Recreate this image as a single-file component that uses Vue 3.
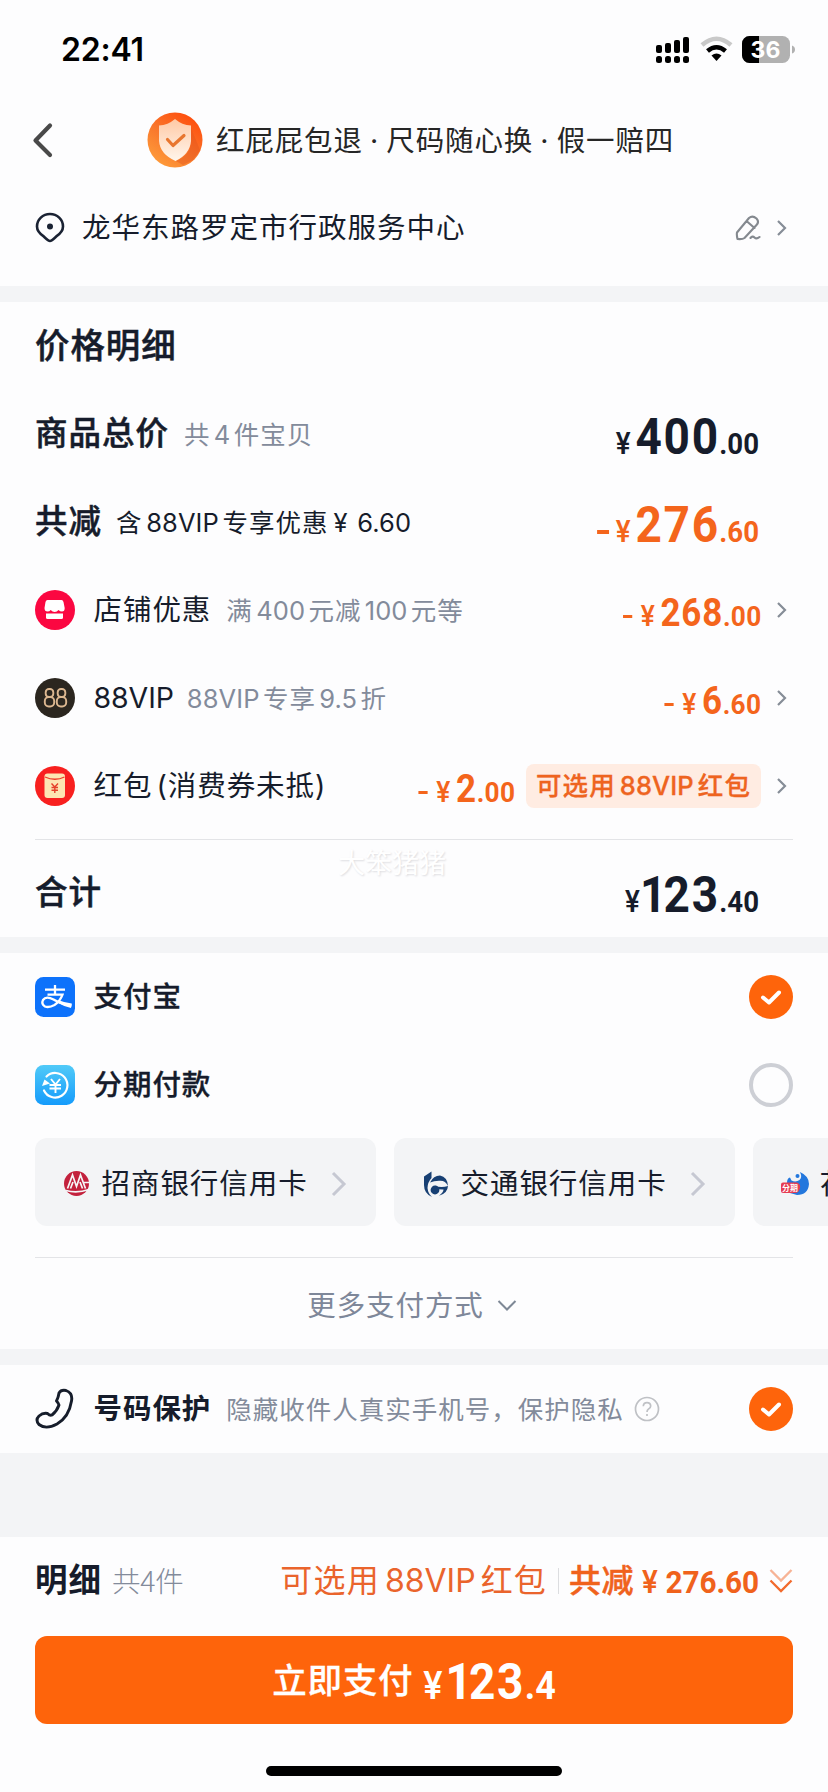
<script setup>
const discounts = [
  { id: 'shop', label: '店铺优惠', note: [['满'], ['400', 1], ['元减'], ['100', 1], ['元等']], int: '268', dec: '.00' },
  { id: 'vip', label: '88VIP', note: [['88VIP', 1], ['专享'], ['9.5', 1], ['折']], int: '6', dec: '.60' },
  { id: 'packet', label: '红包', extra: '(消费券未抵)', note: [], int: '2', dec: '.00', tag: true },
]
const cards = [
  { id: 'cmb', name: '招商银行信用卡' },
  { id: 'bocom', name: '交通银行信用卡' },
  { id: 'huabei', name: '花呗分期' },
]
</script>

<template>
  <main class="page">
    <header class="status">
      <span class="clock">22:41</span>
      <svg class="status-icons" width="142" height="30" viewBox="0 0 142 30">
        <g fill="#000">
          <rect x="0" y="11" width="6" height="8" rx="2" /><rect x="9" y="9" width="6" height="10" rx="2" />
          <rect x="18" y="6" width="6" height="13" rx="2" /><rect x="27" y="3" width="6" height="16" rx="2" />
          <rect x="0" y="22" width="6" height="7" rx="2.5" /><rect x="9" y="22" width="6" height="7" rx="2.5" />
          <rect x="18" y="22" width="6" height="7" rx="2.5" /><rect x="27" y="22" width="6" height="7" rx="2.5" />
        </g>
        <g fill="none">
          <path d="M46 11Q60.500-1.500 75 11" stroke="#c9c9c9" stroke-width="4.500" />
          <path d="M51.500 17Q60.500 9.500 69.500 17" stroke="#000" stroke-width="4.500" />
        </g>
        <path d="M55.500 21.500Q60.500 17.500 65.500 21.500L60.500 27Z" fill="#000" />
        <rect x="86" y="2" width="48" height="27" rx="7.500" fill="#b1b1b1" />
        <path d="M103 2H93.500A7.500 7.500 0 0 0 86 9.500V21.500A7.500 7.500 0 0 0 93.500 29H103Z" fill="#000" />
        <path d="M136 11.500Q139 12.500 139 15.500T136 19.500Z" fill="#b1b1b1" />
        <text x="109.500" y="24" text-anchor="middle" class="battery-text">36</text>
      </svg>
    </header>

    <nav class="nav">
      <svg class="back" width="22" height="36" viewBox="0 0 22 36" fill="none" stroke="#494949" stroke-width="4.200" stroke-linecap="round" stroke-linejoin="round"><path d="M18 3.500L3.500 18.500L18 33" /></svg>
      <svg class="shield" width="56" height="56" viewBox="0 0 56 56">
        <defs>
          <linearGradient id="gc" x1=".8" y1="0" x2=".1" y2="1"><stop offset="0" stop-color="#ff4a0a" /><stop offset=".5" stop-color="#f9772c" /><stop offset="1" stop-color="#ffa23c" /></linearGradient>
          <linearGradient id="gs" x1=".4" y1="0" x2=".4" y2="1"><stop offset="0" stop-color="#ffc9a5" /><stop offset="1" stop-color="#fff6ec" /></linearGradient>
        </defs>
        <circle cx="28" cy="28" r="27.500" fill="url(#gc)" />
        <path d="M44 16V32Q43 43 29 49L36 53L46 48L53 38Z" fill="#e0521c" opacity=".4" />
        <path d="M28 7Q35 13 44 13.500V29Q43 42 28.500 49Q13 42 12 29V13.500Q21 13 28 7Z" fill="url(#gs)" />
        <path d="M20.500 27.500L26 33.500L37 23.500" fill="none" stroke="#e8762f" stroke-width="3.200" stroke-linecap="round" stroke-linejoin="round" />
      </svg>
      <span class="promise">红屁屁包退 · 尺码随心换 · 假一赔四</span>
    </nav>

    <section class="address">
      <svg width="30" height="32" viewBox="0 0 30 32"><path d="M15 29Q13.500 29 9 24.700Q2 20 2 14.500A13 12.500 0 0 1 28 14.500Q28 20 21 24.700Q16.500 29 15 29Z" fill="none" stroke="#1a2233" stroke-width="2.600" /><circle cx="15" cy="14.500" r="3" fill="#1a2233" /></svg>
      <span class="place">龙华东路罗定市行政服务中心</span>
      <svg class="pen" width="26" height="28" viewBox="0 0 26 28" fill="none" stroke="#84898f" stroke-width="2.100" stroke-linecap="round" stroke-linejoin="round"><path d="M2 18.500L14 4Q17.500 1 21.500 4.500Q24.500 8 21.500 11L9.500 24Q7.500 25.500 2.500 25Q1.500 21 2 18.500ZM11.500 7L19.500 14M15.500 24Q17.500 21.500 19.500 23.500T24.500 23" /></svg>
      <svg class="arrow" width="12" height="18" viewBox="0 0 12 18"><path d="M2 2L9 9L2 16" /></svg>
    </section>

    <section class="block prices">
      <h1>价格明细</h1>
      <div class="row">
        <b class="head">商品总价</b>
        <span class="note total-note">共<i>4</i>件宝贝</span>
        <span class="price big dark"><em class="yen">¥</em><em class="int">400</em><em class="dec">.00</em></span>
      </div>
      <div class="row">
        <b class="head">共减</b>
        <span class="note ink">含<i>88VIP</i>专享优惠<i class="cny">¥</i><i>6.60</i></span>
        <span class="price big"><em class="minus"></em><em class="yen">¥</em><em class="int">276</em><em class="dec">.60</em></span>
      </div>
      <div v-for="d in discounts" :key="d.id" class="row">
        <svg class="icon" width="40" height="40" viewBox="0 0 40 40">
          <template v-if="d.id === 'shop'">
            <circle cx="20" cy="20" r="20" fill="#fb0741" />
            <path d="M12.500 10H26.500Q28 10 28.500 12L29.700 18Q29.700 21.500 27 21.500Q25 21.500 23.500 20Q22 22 19.700 22T15.700 20Q14.500 21.500 12.500 21.500Q9.500 21.500 9.500 18L10.500 12Q11 10 12.500 10Z" fill="#fff" />
            <path d="M11 23.500H28V27.500Q28 29 26.500 29H12.500Q11 29 11 27.500Z" fill="#fff" />
          </template>
          <template v-else-if="d.id === 'vip'">
            <circle cx="20" cy="20" r="20" fill="#2b261f" />
            <g fill="none" stroke="#dcb790" stroke-width="1.900"><rect x="10.700" y="11" width="7.600" height="8" rx="3.300" /><rect x="9.800" y="19" width="9.400" height="9.500" rx="4" /><rect x="22.700" y="11" width="7.600" height="8" rx="3.300" /><rect x="21.800" y="19" width="9.400" height="9.500" rx="4" /></g>
          </template>
          <template v-else>
            <circle cx="20" cy="20" r="20" fill="#f8201f" />
            <rect x="9.500" y="7.500" width="20.500" height="24.500" rx="3" fill="#fde5b2" />
            <path d="M10 11Q20 15.500 29.500 11" fill="none" stroke="#ee3a28" stroke-width="1.300" />
            <path d="M16.500 17.500L19.800 21L23 17.500M16.500 21.500H23M16.500 24.300H23M19.800 21V27" fill="none" stroke="#e5402a" stroke-width="1.400" />
          </template>
        </svg>
        <span class="label" :class="d.id">{{ d.label }}<span v-if="d.extra" class="extra">{{ d.extra }}</span></span>
        <span class="note"><template v-for="(p, i) in d.note" :key="i"><i v-if="p[1]" :class="{ first: i === 0 }">{{ p[0] }}</i><template v-else>{{ p[0] }}</template></template></span>
        <span class="price"><em class="minus"></em><em class="yen">¥</em><em class="int">{{ d.int }}</em><em class="dec">{{ d.dec }}</em></span>
        <span v-if="d.tag" class="tag">可选用<i>88VIP</i>红包</span>
        <svg class="arrow" width="12" height="18" viewBox="0 0 12 18"><path d="M2 2L9 9L2 16" /></svg>
      </div>
      <hr>
      <div class="row sum">
        <b class="head">合计</b>
        <span class="price big dark"><em class="yen">¥</em><em class="int lead-one">123</em><em class="dec">.40</em></span>
      </div>
      <span class="mark">大笨猪猪</span>
    </section>

    <section class="block pay">
      <div class="row">
        <svg class="icon" width="40" height="40" viewBox="0 0 40 40">
          <rect width="40" height="40" rx="8.500" fill="#0d72fb" />
          <path d="M10 12.700H30M20 8V17.500M12.500 17.700H27.500Q25 24.500 19.500 28Q14 31 10 29.500Q6 27 8 23Q11 18.500 18.500 22.500Q26 27 36.500 28.500" fill="none" stroke="#fff" stroke-width="2.300" />
          <path d="M23 23Q29 25.500 36.800 26.500L36 31Q29 29.500 22 25.500Z" fill="#fff" />
        </svg>
        <b class="label mid">支付宝</b>
        <svg class="check" width="44" height="44" viewBox="0 0 44 44"><circle cx="22" cy="22" r="22" /><path d="M14 22.500L20 27.500L30 17.500" /></svg>
      </div>
      <div class="row">
        <svg class="icon" width="40" height="40" viewBox="0 0 40 40">
          <defs><linearGradient id="gf" x1="0" y1="0" x2="0" y2="1"><stop offset="0" stop-color="#51caf8" /><stop offset="1" stop-color="#159bfb" /></linearGradient></defs>
          <rect width="40" height="40" rx="8.500" fill="url(#gf)" />
          <path d="M11.500 11.500A12.300 12.300 0 1 1 9 25.500" fill="none" stroke="#fff" stroke-width="2.200" stroke-linecap="round" />
          <path d="M7 21L9.500 14.500L15 18.500Z" fill="#fff" />
          <path d="M16 14L20.500 19.500L25 14M14.500 20H26M14.500 23.500H26M20.500 19.500V28" fill="none" stroke="#fff" stroke-width="1.900" />
        </svg>
        <b class="label mid">分期付款</b>
        <span class="radio"></span>
      </div>
      <div class="cards">
        <div v-for="c in cards" :key="c.id" class="card">
          <svg width="28" height="28" viewBox="0 0 28 28">
            <template v-if="c.id === 'cmb'">
              <circle cx="13.500" cy="13.500" r="12.500" fill="#c3213d" />
              <path d="M4.500 18.500L9.500 5L13.500 16.500L17.500 5L22.500 18.500M7.500 18.500L10 12M19.500 18.500L17 12M21 12.500H27" fill="none" stroke="#f6f6f8" stroke-width="1.700" />
              <path d="M3 20.500Q14 23.500 26 19.500" fill="none" stroke="#f6f6f8" stroke-width="1.800" />
            </template>
            <template v-else-if="c.id === 'bocom'">
              <path d="M2 6.500L9.500 1.500V8Q5.500 12.500 5.500 18Q6 23.500 10 27Q2 23.500 2 15Z" fill="#173f73" />
              <path d="M8 12.500Q11.500 5.500 18 5.500Q25.500 7 26 16Q23.500 10.800 18.500 10.800Q12.500 10.500 8 12.500Z" fill="#173f73" />
              <circle cx="13" cy="20" r="4.400" fill="#173f73" />
              <path d="M13 15.700Q19 18.300 26 16Q25.500 23.500 17 25.700Q21.500 22.500 21.500 19.500Q17 19.800 13 18Z" fill="#173f73" />
            </template>
            <template v-else>
              <path d="M6 13Q6 8 9 7.500L10.500 10.500Q15 12.500 18.500 10Q21.500 7.500 19 2Q28 6 28 14Q27 25 16 25L9 23Z" fill="#2377dd" />
              <circle cx="16.500" cy="6" r="2" fill="#2377dd" />
              <path d="M2 12.500H16Q20 14 19 18Q18 23 14 23H2Q0 23 0 21V14.500Q0 12.500 2 12.500Z" fill="#e63d53" />
              <text x="1" y="21" class="mini">分期</text>
            </template>
          </svg>
          <span class="bank">{{ c.name }}</span>
          <svg class="card-arrow" width="18" height="28" viewBox="0 0 18 28"><path d="M3 3L14 14L3 25" /></svg>
        </div>
      </div>
      <hr>
      <div class="more">
        <span>更多支付方式</span>
        <svg width="20" height="14" viewBox="0 0 20 14" fill="none" stroke="#7e8896" stroke-width="2"><path d="M1.500 2L10 10.500L18.500 2" /></svg>
      </div>
    </section>

    <section class="block protect">
      <div class="row">
        <svg class="icon" width="40" height="42" viewBox="0 0 40 42"><path d="M24 5Q26 1.500 31 2.500Q38 5 36.500 13Q34 29 22 36Q11 42 4 36.500Q0 32 4 28Q8 24.500 12.500 25.500Q15 28 17 27Q22 23 24 17Q23.500 15 21.500 13Q23.500 9 24 5Z" fill="none" stroke="#161d2b" stroke-width="2.900" stroke-linejoin="round" /></svg>
        <b class="label mid bold">号码保护</b>
        <span class="note privacy">隐藏收件人真实手机号，保护隐私</span>
        <svg class="help" width="26" height="26" viewBox="0 0 26 26" fill="none" stroke="#bfc1c5" stroke-width="1.700"><circle cx="13" cy="13" r="11.500" /><path d="M9.300 10.200Q9.500 6.700 13 6.700T16.700 10Q16.700 12 14.300 13.200Q13 14 13 16" /><path d="M13 18V20" /></svg>
        <svg class="check" width="44" height="44" viewBox="0 0 44 44"><circle cx="22" cy="22" r="22" /><path d="M14 22.500L20 27.500L30 17.500" /></svg>
      </div>
    </section>

    <footer class="footer">
      <div class="row">
        <b class="head bold">明细</b>
        <span class="count">共4件</span>
        <span class="vip-tip">可选用<i>88VIP</i>红包</span>
        <span class="bar"></span>
        <b class="saved">共减</b>
        <span class="saved-num"><em class="yen">¥</em>276.60</span>
        <svg width="24" height="26" viewBox="0 0 24 26" fill="none" stroke="#f26a2c" stroke-width="2.300"><path d="M1.500 2L12 12.500L22.500 2" opacity=".5" /><path d="M1.500 12.500L12 23L22.500 12.500" /></svg>
      </div>
      <button class="submit"><span class="go">立即支付</span><span class="amount"><em class="yen">¥</em><em class="int lead-one">123</em><em class="dec">.4</em></span></button>
      <div class="home"></div>
    </footer>
  </main>
</template>

<style>
body { margin: 0; background: #fdfdfe; }
</style>

<style scoped>
.page { width: 828px; height: 1792px; overflow: hidden; display: flex; flex-direction: column; background: #f3f4f6; color: #161c2b; font-family: Inter, "Noto Sans CJK SC", sans-serif; line-height: 1; }
i, em { font-style: normal; }
svg { display: block; flex: none; }
.status { height: 98px; display: flex; align-items: center; justify-content: space-between; padding: 0 30px 0 61px; background: #fdfdfe; color: #000; box-sizing: border-box; }
.clock { font-size: 32px; font-weight: 600; letter-spacing: -.2px; padding-top: 2px; }
.battery-text { font: 700 23px Inter, sans-serif; fill: #fff; }
.nav { height: 84px; display: flex; align-items: center; background: #fdfdfe; padding-left: 32px; }
.shield { margin-left: 93px; }
.promise { margin-left: 13px; padding-top: 2px; font-size: 28.5px; letter-spacing: .85px; word-spacing: -1.6px; color: #262626; white-space: pre; }
.address { height: 104px; box-sizing: border-box; padding: 0 40px 12px 35px; display: flex; align-items: center; background: #fdfdfe; margin-bottom: 16px; }
.place { margin-left: 17px; font-size: 28.5px; letter-spacing: 1px; padding-top: 1px; }
.pen { margin-left: auto; margin-right: 15px; }
.arrow { fill: none; stroke: #868d97; stroke-width: 2.2; }
.row .arrow { margin-right: 5px; }
.block { background: #fdfdfe; position: relative; flex: none; margin-bottom: 16px; }
.prices { height: 635px; }
h1 { margin: 0; height: 88px; box-sizing: border-box; padding-top: 1px; display: flex; align-items: center; padding-left: 35px; font-size: 34.5px; letter-spacing: .9px; font-weight: 500; -webkit-text-stroke: .5px currentColor; }
.row { height: 88px; display: flex; align-items: center; padding: 0 35px; white-space: nowrap; }
.head { font-size: 32.5px; letter-spacing: 1px; font-weight: 500; -webkit-text-stroke: .5px currentColor; padding-top: 1px; }
.icon { margin-right: 18.5px; }
.label { font-size: 28.5px; letter-spacing: .95px; padding-top: 1px; }
.vip { letter-spacing: -.1px; }
.extra { margin-left: 4px; }
.mid { font-weight: 500; -webkit-text-stroke: .3px currentColor; }
.bold { font-weight: 700; -webkit-text-stroke: 0; }
.note { font-size: 25.5px; letter-spacing: 1px; color: #838b9b; margin-left: 15px; padding-top: 1px; }
.note i, .tag i { margin: 0 3.3px; letter-spacing: .1px; }
.note .first { margin-left: 0; }
.vip + .note { margin-left: 13px; }
.note.ink { color: #161c2b; margin-left: 14px; }
.ink i { margin: 0 3.6px; }
.ink .cny { margin-left: 5px; margin-right: 6px; }
.price { margin-left: auto; display: flex; align-items: baseline; font-family: Roboto, sans-serif; font-weight: 700; color: #f4651c; margin-right: 15px; line-height: 40px; margin-top: 9px; transform: scaleX(.92); transform-origin: right; }
.price .int { font-size: 38px; letter-spacing: .8px; }
.price .dec { font-size: 28.5px; letter-spacing: .3px; }
.yen { font-family: Inter, sans-serif; font-weight: 600; font-size: 28px; letter-spacing: 0; margin-right: 6px; }
.minus { width: 10px; height: 3px; background: currentColor; margin-right: 9px; transform: translateY(-8px); }
.price.big { margin-right: 34px; margin-top: 13px; }
.price.big .int { font-size: 50px; letter-spacing: 2px; }
.price.big .dec { font-size: 30px; letter-spacing: .1px; margin-left: -1px; }
.big .yen { font-size: 29.5px; margin-right: 5px; }
.big .minus { width: 13px; height: 4px; margin-right: 7px; }
.price.dark { color: #161c2b; }
.lead-one { margin-left: -5px; }
.lead-one::first-letter { letter-spacing: -3px; }
.tag { font-size: 25.5px; letter-spacing: 1.1px; font-weight: 500; -webkit-text-stroke: .3px currentColor; color: #ee641f; background: #ffece2; border-radius: 8px; height: 44px; line-height: 44px; padding: 0 10px; margin: 0 15px 0 -4px; }
.tag i { margin: 0 4px; }
hr { border: 0; height: 1px; background: #e3e4e7; margin: 9px 35px 8px; }
.sum .head { padding-top: 2px; }
.mark { position: absolute; left: 338px; top: 548px; font-size: 27px; color: #fff; text-shadow: 1px 1px 2px #dddde0; }
.pay { height: 396px; }
.check { margin-left: auto; }
.check circle { fill: #fe640b; }
.check path { fill: none; stroke: #fff; stroke-width: 4; stroke-linecap: round; stroke-linejoin: round; }
.radio { margin-left: auto; width: 44px; height: 44px; border: 4px solid #cdcfd5; border-radius: 50%; box-sizing: border-box; }
.cards { display: flex; gap: 18px; margin: 9px 0 31px; padding-left: 35px; overflow: hidden; }
.card { flex: none; box-sizing: border-box; width: 341px; height: 88px; border-radius: 12px; background: #f3f4f6; display: flex; align-items: center; padding: 3px 0 0 28px; }
.bank { font-size: 28.5px; letter-spacing: .95px; margin-left: 10.5px; padding-top: 2px; }
.card-arrow { margin-left: 22px; fill: none; stroke: #c6c8d2; stroke-width: 3; }
.mini { font: 700 8px "Noto Sans CJK SC", sans-serif; fill: #fff; }
.pay hr { margin: 0 35px; }
.more { height: 91px; box-sizing: border-box; padding: 5px 4px 0 0; display: flex; align-items: center; justify-content: center; gap: 13px; font-size: 28.5px; letter-spacing: .9px; color: #7e8799; }
.protect { height: 88px; margin-bottom: 84px; }
.help { margin-left: 10px; }
.footer { background: #fdfdfe; flex: 1; }
.count { font: 300 28.5px/1 "Noto Sans CJK SC", sans-serif; color: #838b9b; margin: -2px 0 0 10px; letter-spacing: -.2px; }
.vip-tip { font-size: 32px; letter-spacing: 1.2px; color: #ea642c; margin-left: auto; }
.vip-tip i { margin: 0 5px; letter-spacing: 0; }
.bar { width: 1px; height: 26px; background: #dcdde0; margin: 0 10px 0 11px; }
.saved { font-size: 32px; letter-spacing: .5px; font-weight: 500; -webkit-text-stroke: .5px currentColor; color: #f0621c; }
.saved-num { font: 700 32px/1 Roboto, sans-serif; letter-spacing: -.1px; color: #f0621c; margin: 1px 10px 0 -1px; transform: scaleX(.93); transform-origin: right; }
.saved-num .yen { font-size: 31px; margin-right: 8px; }
.submit { display: flex; align-items: baseline; justify-content: center; margin: 11px 35px 42px; width: 758px; height: 88px; border: 0; border-radius: 12px; background: #fe640b; color: #fff; font: 700 50px/92px Roboto, sans-serif; padding: 0; }
.go { font: 500 34.5px/1 "Noto Sans CJK SC", sans-serif; letter-spacing: .8px; margin-right: 10px; transform: translateY(-6px); -webkit-text-stroke: .3px currentColor; }
.amount { display: flex; align-items: baseline; transform: scaleX(.92); transform-origin: left; margin-right: -12px; }
.amount .yen { font-size: 38px; margin-right: 8px; }
.amount .int { letter-spacing: 1.6px; }
.amount .dec { font-size: 39px; letter-spacing: 0; }
.home { width: 296px; height: 10px; border-radius: 5px; background: #000; margin: 0 auto; }
</style>
